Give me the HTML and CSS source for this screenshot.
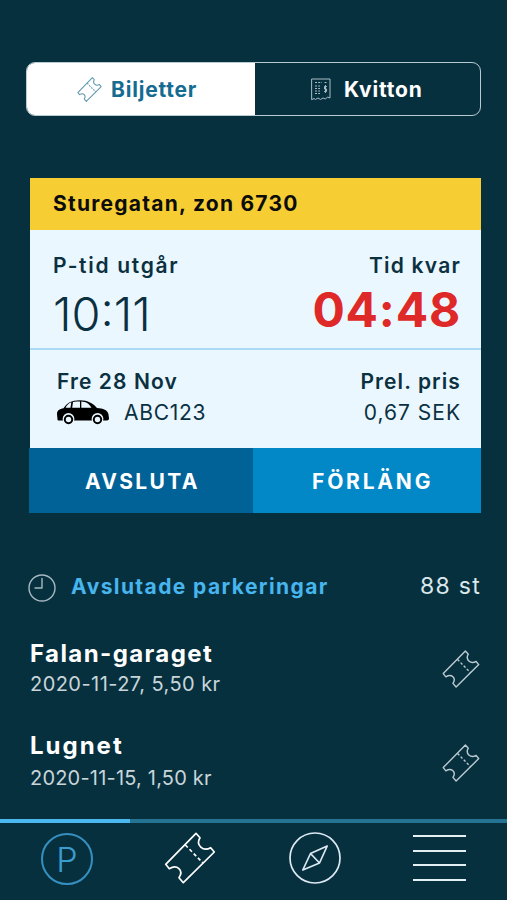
FILE: index.html
```html
<!DOCTYPE html>
<html lang="sv">
<head>
  <meta charset="UTF-8" />
  <meta name="viewport" content="width=device-width, initial-scale=1.0"/>
  <title>Biljetter</title>
  <link rel="stylesheet" href="styles.css">
</head>
<body>

  <!-- Shared icon -->
  <svg class="sprite">
    <symbol id="ticket" viewBox="0 0 52 52">
      <path d="M32 1.3 L36 5.7 C31.5 13 39 20 46.7 15.7 L50.3 20 L19.3 50.7 L15 45.7 C20 38 13 32 5.3 36.7 L1.7 32.3 Z"/>
      <path class="perforation" d="M21.3 13 L39.3 31.3"/>
    </symbol>
  </svg>

  <!-- Tabs -->
  <div class="tabs">
    <div class="tab active">
      <svg class="tab-ticket"><use href="#ticket"/></svg>
      <span>Biljetter</span>
    </div>
    <div class="tab">
      <svg class="receipt" viewBox="0 0 20 23">
        <path d="M1 1 H19 V20 L16.5 19 L14.5 21 L12 20 L9.5 21.5 L7 20 L4.5 21.5 L3 20.5 L1 21.5 Z"/>
        <path class="receipt-rows" d="M4 4.5 H11 M13.5 4.5 H15.5 M4 8 H9 M4 10.5 H9 M4 13 H9 M4 15.5 H9"/>
        <path d="M15.5 8.5 H13.5 V11 H15.5 V13.5 H13.5 M14.5 7.5 V14.5"/>
      </svg>
      <span>Kvitton</span>
    </div>
  </div>

  <!-- Active parking -->
  <div class="card">
    <div class="card-title">Sturegatan, zon 6730</div>
    <div class="card-times">
      <div>
        <div class="label label-out">P-tid utgår</div>
        <div class="time">10:11</div>
      </div>
      <div class="right">
        <div class="label">Tid kvar</div>
        <div class="time-left">04:48</div>
      </div>
    </div>
    <div class="card-info">
      <div>
        <div class="info-head">Fre 28 Nov</div>
        <div class="car-row">
          <svg class="car" viewBox="0 0 52 25">
            <path d="M0.5 19.5 L0 14 C0 10.5 2.5 9 6.5 8.3 C10 3 14 0.3 23 0.3 C31 0.3 36 3.5 40 8 C46 8.5 51 10 51.5 14.5 L52 18.5 C52 20 51 20.5 49 20.5 H3 C1 20.5 0.5 20.5 0.5 19.5 Z"/>
            <path class="car-window" d="M8.5 7.8 C10 4.8 12 3 14.3 2.3 L13.5 7.8 Z M15.2 7.8 L16 2 C18 1.6 20.5 1.5 23 1.5 V7.8 Z M24.3 7.8 V1.5 C28.5 1.7 32 3.2 34.5 7.8 Z"/>
            <circle class="car-arch" cx="11.5" cy="19" r="5.9"/>
            <circle class="car-arch" cx="40.5" cy="19" r="5.9"/>
            <circle class="wheel" cx="11.5" cy="19.5" r="3.7"/>
            <circle class="wheel" cx="40.5" cy="19.5" r="3.7"/>
          </svg>
          <span class="plate">ABC123</span>
        </div>
      </div>
      <div class="right">
        <div class="info-head">Prel. pris</div>
        <div class="price">0,67 SEK</div>
      </div>
    </div>
    <div class="card-buttons">
      <button class="end">AVSLUTA</button>
      <button class="extend">FÖRLÄNG</button>
    </div>
  </div>

  <!-- Finished parkings -->
  <div class="history-head">
    <svg class="clock" viewBox="0 0 28 28">
      <circle cx="14" cy="14" r="13"/>
      <path d="M14 4.5 V14 H7"/>
    </svg>
    <h2>Avslutade parkeringar</h2>
    <span class="count">88 st</span>
  </div>

  <div class="parking">
    <div>
      <h3>Falan-garaget</h3>
      <p class="meta">2020-11-27, 5,50 kr</p>
    </div>
    <svg class="list-ticket"><use href="#ticket"/></svg>
  </div>
  <div class="parking second">
    <div>
      <h3>Lugnet</h3>
      <p class="meta">2020-11-15, 1,50 kr</p>
    </div>
    <svg class="list-ticket"><use href="#ticket"/></svg>
  </div>

  <!-- Bottom navigation -->
  <div class="nav">
    <div class="nav-line"></div>
    <div class="nav-items">
      <div class="nav-p">P</div>
      <svg class="nav-ticket"><use href="#ticket"/></svg>
      <svg class="compass" viewBox="0 0 52 52">
        <circle cx="26" cy="26" r="25"/>
        <path d="M38.2 14 L21.5 21.5 L13.8 38 L30.5 31 Z M21.5 21.5 L30.5 31"/>
      </svg>
      <div class="menu"><i></i><i></i><i></i><i></i></div>
    </div>
  </div>

</body>
</html>
```

FILE: styles.css
```css
* {
  margin: 0;
  padding: 0;
  box-sizing: border-box;
}

body {
  font-family: Inter, "Open Sans", sans-serif;
  background-color: #07303f;
  color: white;
  width: 507px;
  height: 900px;
  overflow: hidden;
  display: flex;
  flex-direction: column;
}

svg {
  display: block;
  flex-shrink: 0;
  fill: none;
  stroke: white;
  stroke-linecap: round;
  stroke-linejoin: round;
}

.sprite {
  display: none;
}

.tabs {
  display: flex;
  width: 455px;
  height: 54px;
  margin: 62px 0 0 26px;
  border: 1.5px solid #b9cbd2;
  border-radius: 9px;
  overflow: hidden;
  font-size: 21px;
  font-weight: 700;
  letter-spacing: 0.8px;
}

.tab {
  flex: 1;
  display: flex;
  align-items: center;
  padding-left: 56px;
}

.tab.active {
  flex: 0 0 228px;
  padding-left: 50px;
  background-color: white;
  color: #156b90;
}

.tab-ticket {
  width: 25px;
  height: 25px;
  margin-right: 9px;
  stroke: #5e97ac;
  stroke-width: 2.2;
}

.receipt {
  width: 20px;
  height: 23px;
  margin-right: 13px;
  stroke: #a9bdc6;
  stroke-width: 1;
}

.receipt-rows {
  stroke-dasharray: 2 1.2;
  stroke-linecap: butt;
}

.card {
  width: 451px;
  margin: 62px 0 0 30px;
  background-color: #eaf7ff;
  color: #0b303f;
}

.card-title {
  height: 52px;
  line-height: 52px;
  padding-left: 23px;
  background-color: #f6ce34;
  color: #0c0c0c;
  font-size: 21px;
  font-weight: 700;
  letter-spacing: 1.25px;
}

.card-times {
  display: flex;
  justify-content: space-between;
  height: 120px;
  padding: 21px 20px 0 23px;
  border-bottom: 2px solid #a9daf6;
}

.right {
  display: flex;
  flex-direction: column;
  align-items: flex-end;
}

.label {
  font-size: 21px;
  line-height: 30px;
  font-weight: 600;
  letter-spacing: 1.2px;
}

.label-out {
  letter-spacing: 1.7px;
}

.time {
  font-size: 47px;
  line-height: 66px;
  font-weight: 300;
}

.time-left {
  font-size: 48px;
  line-height: 58px;
  font-weight: 700;
  letter-spacing: 0.8px;
  color: #df2828;
}

.card-info {
  display: flex;
  justify-content: space-between;
  height: 98px;
  padding: 17px 20px 0 27px;
  font-size: 21px;
  line-height: 30px;
}

.info-head {
  font-weight: 600;
  letter-spacing: 1.1px;
}

.car-row {
  display: flex;
  align-items: center;
}

.car {
  width: 52px;
  height: 25px;
  margin-right: 15px;
  margin-bottom: 2px;
  fill: black;
  stroke: none;
}

.car-window,
.car-arch {
  fill: #eaf7ff;
}

.wheel {
  fill: none;
  stroke: black;
  stroke-width: 2;
}

.plate {
  line-height: 32px;
  letter-spacing: 0.7px;
}

.price {
  line-height: 32px;
  letter-spacing: 1px;
}

.card-buttons {
  display: flex;
  height: 65px;
  margin-left: -1px;
}

.card-buttons button {
  flex: 1;
  padding-top: 2px;
  border: none;
  color: white;
  font-family: inherit;
  font-size: 21px;
  font-weight: 700;
  text-align: left;
}

.card-buttons .end {
  flex: 0 0 224px;
  padding-left: 56px;
  background-color: #016297;
  letter-spacing: 2.3px;
}

.card-buttons .extend {
  padding-left: 59px;
  background-color: #0288c7;
  letter-spacing: 2.8px;
}

.history-head {
  display: flex;
  align-items: center;
  height: 30px;
  margin: 59px 26px 0 28px;
}

.clock {
  width: 28px;
  height: 28px;
  margin-top: 2px;
  margin-right: 15px;
  stroke: #a5b9c2;
  stroke-width: 1.4;
}

.history-head h2 {
  flex: 1;
  font-size: 21px;
  line-height: 30px;
  font-weight: 700;
  letter-spacing: 1.4px;
  color: #47b5ee;
}

.count {
  font-size: 23px;
  line-height: 26px;
  margin-bottom: 3px;
  letter-spacing: 1.3px;
  color: #dce8ec;
}

.parking {
  display: flex;
  justify-content: space-between;
  align-items: center;
  height: 62px;
  margin: 36px 27px 0 30px;
}

.parking h3 {
  font-size: 24px;
  line-height: 31px;
  font-weight: 700;
  letter-spacing: 1.4px;
}

.meta {
  font-size: 20px;
  line-height: 31px;
  letter-spacing: 0.45px;
  color: #c8d5da;
}

.parking.second {
  height: 66px;
  margin-top: 29px;
}

.second h3,
.second .meta {
  line-height: 33px;
}

.second h3 {
  letter-spacing: 2px;
}

.second .meta {
  letter-spacing: 0.2px;
}

.second .list-ticket {
  margin-top: 2px;
}

.list-ticket {
  width: 38px;
  height: 38px;
  stroke: #bccbd2;
  stroke-width: 1.9;
}

.nav {
  margin-top: auto;
  height: 81px;
}

.nav-line {
  height: 4px;
  background: linear-gradient(to right, #4bb8f0 130px, #257393 130px);
}

.nav-items {
  display: flex;
  height: 70px;
  padding-left: 41px;
  align-items: center;
}

.nav-p {
  width: 52px;
  height: 52px;
  margin-top: 2px;
  border: 2px solid #3590c0;
  border-radius: 50%;
  font-size: 34px;
  line-height: 49px;
  font-weight: 300;
  text-align: center;
  color: #3a9dcf;
}

.nav-ticket {
  width: 52px;
  height: 52px;
  margin-left: 71px;
  stroke-width: 1.7;
}

.perforation {
  stroke-dasharray: 3.5 2.5;
  stroke-linecap: butt;
}

.compass {
  width: 52px;
  height: 52px;
  margin-left: 73px;
  stroke: #dde9f2;
  stroke-width: 1.7;
}

.menu {
  display: flex;
  flex-direction: column;
  justify-content: space-between;
  width: 53px;
  height: 46px;
  margin-left: 72px;
}

.menu i {
  height: 2px;
  background-color: #e4eff3;
}
```
